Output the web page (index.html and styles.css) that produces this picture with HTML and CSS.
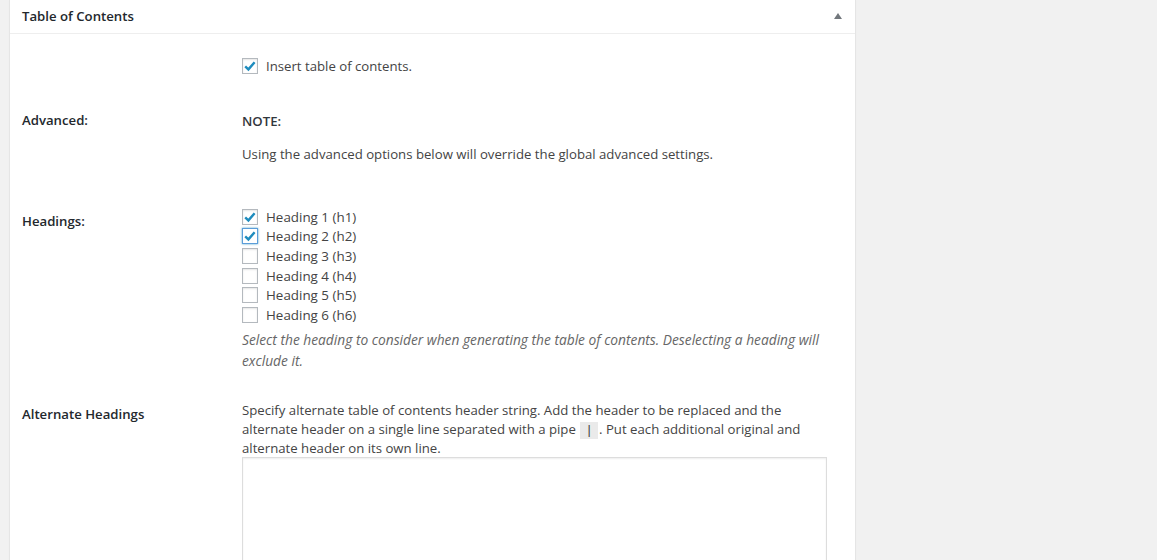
FILE: index.html
```html
<!DOCTYPE html>
<html lang="en">
<head>
    <meta charset="UTF-8">
    <title>Table of Contents</title>
    <link rel="stylesheet" href="styles.css">
</head>
<body>
    <div class="postbox">
        <div class="postbox-header">
            <h2>Table of Contents</h2>
            <span class="toggle-arrow"></span>
        </div>
        <div class="inside">
            <div class="row row-insert">
                <div class="label"></div>
                <div class="field">
                    <label class="check-line">
                        <span class="box"><svg viewBox="0 0 16 16" width="16" height="16"><path d="M3.2 8.4 L6.4 11.4 L12.6 4.2" fill="none" stroke="#1e8cbe" stroke-width="2.4"/></svg></span>
                        Insert table of contents.
                    </label>
                </div>
            </div>

            <div class="row row-advanced">
                <div class="label">Advanced:</div>
                <div class="field">
                    <p class="note">NOTE:</p>
                    <p>Using the advanced options below will override the global advanced settings.</p>
                </div>
            </div>

            <div class="row row-headings">
                <div class="label">Headings:</div>
                <div class="field">
                    <ul class="heading-list">
                        <li><span class="box"><svg viewBox="0 0 16 16" width="16" height="16"><path d="M3.2 8.4 L6.4 11.4 L12.6 4.2" fill="none" stroke="#1e8cbe" stroke-width="2.4"/></svg></span>Heading 1 (h1)</li>
                        <li><span class="box focus"><svg viewBox="0 0 16 16" width="16" height="16"><path d="M3.2 8.4 L6.4 11.4 L12.6 4.2" fill="none" stroke="#1e8cbe" stroke-width="2.4"/></svg></span>Heading 2 (h2)</li>
                        <li><span class="box"></span>Heading 3 (h3)</li>
                        <li><span class="box"></span>Heading 4 (h4)</li>
                        <li><span class="box"></span>Heading 5 (h5)</li>
                        <li><span class="box"></span>Heading 6 (h6)</li>
                    </ul>
                    <p class="description">Select the heading to consider when generating the table of contents. Deselecting a heading will exclude it.</p>
                </div>
            </div>

            <div class="row row-alternate">
                <div class="label">Alternate Headings</div>
                <div class="field">
                    <p class="help">Specify alternate table of contents header string. Add the header to be replaced and the alternate header on a single line separated with a pipe <code>|</code>. Put each additional original and alternate header on its own line.</p>
                    <textarea class="alt-text"></textarea>
                </div>
            </div>
        </div>
    </div>
</body>
</html>
```

FILE: styles.css
```css
body {
    margin: 0;
    padding: 0 0 0 9px;
    background-color: #f1f1f1;
    font-family: "Open Sans", "Noto Sans", sans-serif;
    font-size: 13.2px;
    color: #444444;
    overflow: hidden;
    height: 560px;
}

.postbox {
    width: 845px;
    min-height: 600px;
    background-color: #ffffff;
    border: 1px solid #e5e5e5;
    border-top: none;
    box-shadow: 0 1px 1px rgba(0, 0, 0, 0.04);
}

.postbox-header {
    display: flex;
    align-items: center;
    justify-content: space-between;
    height: 33px;
    padding: 0 13px 0 12px;
    border-bottom: 1px solid #eeeeee;
}

.postbox-header h2 {
    margin: 0;
    font-size: 13.2px;
    font-weight: 600;
    color: #23282d;
    line-height: 1;
}

.toggle-arrow {
    width: 0;
    height: 0;
    border-left: 4px solid transparent;
    border-right: 4px solid transparent;
    border-bottom: 6px solid #72777c;
    margin-top: -1px;
}

.inside {
    padding: 0 12px;
}

.row {
    display: grid;
    grid-template-columns: 220px 585px;
}

.label {
    font-size: 13.2px;
    font-weight: 600;
    color: #23282d;
    line-height: 20px;
}

.field p {
    margin: 0;
    line-height: 20px;
}

.box {
    display: inline-flex;
    width: 14px;
    height: 14px;
    border: 1px solid #b4b9be;
    background: #ffffff;
    box-shadow: inset 0 1px 2px rgba(0, 0, 0, 0.1);
    vertical-align: middle;
    margin-right: 8px;
    position: relative;
}

.box svg {
    position: absolute;
    left: -1px;
    top: -1px;
}

.box.focus {
    border-color: #5b9dd9;
    box-shadow: 0 0 2px rgba(30, 140, 190, 0.8);
}

.check-line {
    display: flex;
    align-items: center;
    line-height: 20px;
}

.row-insert {
    padding-top: 22px;
}

.row-advanced {
    padding-top: 34px;
}

.row-advanced .note {
    font-weight: 600;
    color: #32373c;
    margin-top: 1px;
}

.row-advanced .note + p {
    margin-top: 13px;
}

.row-headings {
    padding-top: 43px;
}

.row-headings .label {
    padding-top: 4px;
}

.heading-list {
    list-style: none;
    margin: 0;
    padding: 0;
    font-size: 13.4px;
}

.heading-list li {
    display: flex;
    align-items: center;
    height: 19.6px;
}

.description {
    margin-top: 4px !important;
    font-style: italic;
    font-size: 13.75px;
    color: #666666;
    line-height: 21px !important;
}

.row-alternate {
    padding-top: 30px;
}

.row-alternate .label {
    padding-top: 3px;
}

.help {
    line-height: 19px !important;
}

.help code {
    font-family: "Liberation Mono", monospace;
    font-size: 13px;
    line-height: 1;
    background: #eaeaea;
    padding: 1px 5px;
    margin: 0 1px;
}

.alt-text {
    display: block;
    width: 585px;
    height: 160px;
    margin-top: -1px;
    border: 1px solid #dddddd;
    box-shadow: inset 0 1px 2px rgba(0, 0, 0, 0.07);
    padding: 2px 6px;
    box-sizing: border-box;
    resize: none;
}
```
